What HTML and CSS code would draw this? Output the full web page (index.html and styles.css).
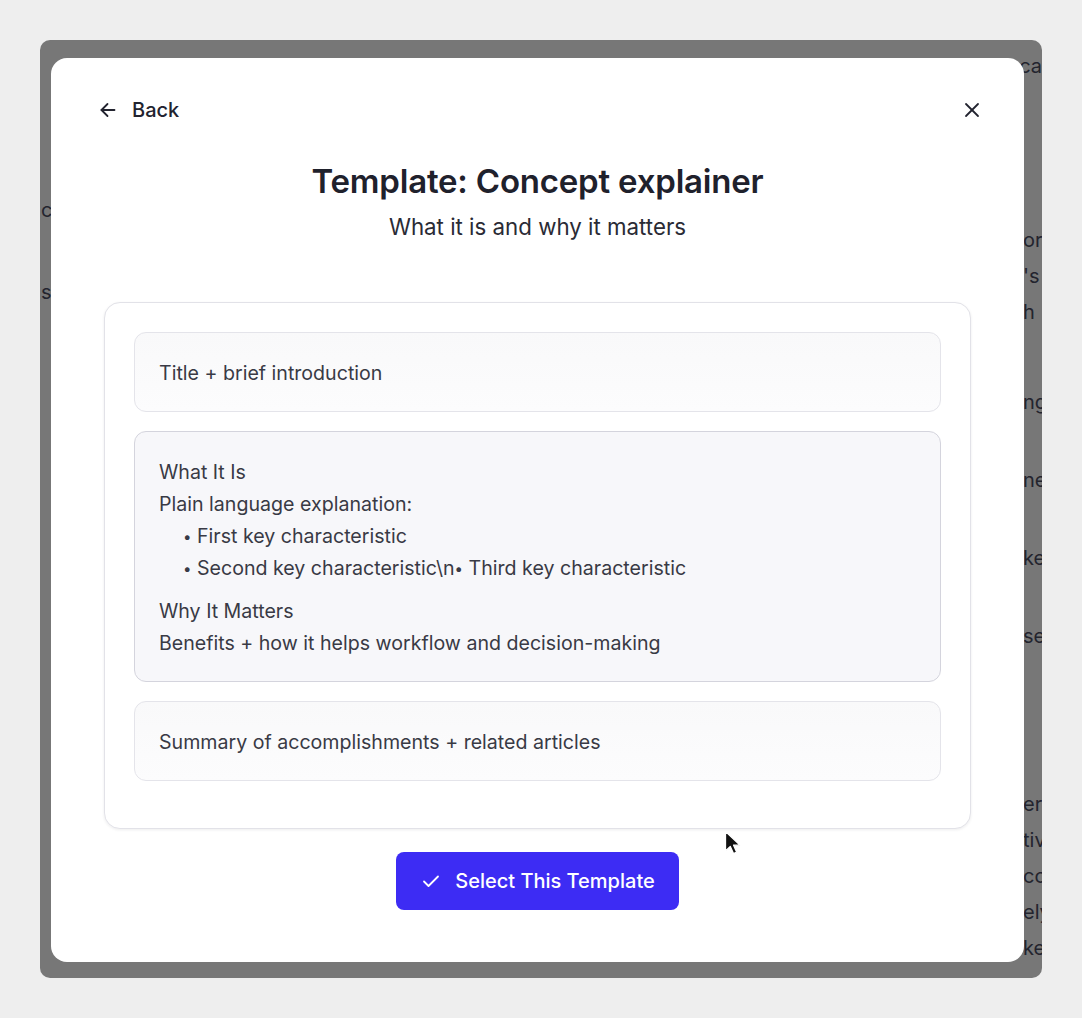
FILE: index.html
```html
<!DOCTYPE html>
<html lang="en">
<head>
<meta charset="utf-8">
<title>Template: Concept explainer</title>
<link rel="stylesheet" href="styles.css">
</head>
<body>
<div class="stage">
  <div class="overlay">
    <div class="bgpage">
      <div class="bg-top">tiles and quick tips to get started, highlights all the critical details in one clear place ca</div>
      <div class="bg-left">
        <div class="bl bl-1">c</div>
        <div class="bl bl-2">s</div>
      </div>
      <div class="bg-right">
        <div class="br br-1">or</div>
        <div class="br">'s</div>
        <div class="br">h</div>
        <div class="br br-g1">ng</div>
        <div class="br br-g2">ne</div>
        <div class="br br-g2">ke</div>
        <div class="br br-g2">se</div>
        <div class="br br-g3">er</div>
        <div class="br">tiv</div>
        <div class="br">co</div>
        <div class="br">ely</div>
        <div class="br">ke</div>
      </div>
    </div>

    <div class="modal">
      <div class="modal-header">
        <button class="back-btn" type="button">
          <svg class="back-icon" viewBox="0 0 20 20" width="20" height="20" fill="none" stroke="currentColor" stroke-width="1.8" stroke-linecap="round" stroke-linejoin="round"><path d="M16.5 10H3.5"/><path d="M9.5 4L3.5 10l6 6"/></svg>
          <span>Back</span>
        </button>
        <button class="close-btn" type="button" aria-label="Close">
          <svg viewBox="0 0 16 16" width="16" height="16" fill="none" stroke="currentColor" stroke-width="1.8" stroke-linecap="round"><path d="M2 2l12 12"/><path d="M14 2L2 14"/></svg>
        </button>
      </div>

      <h1 class="title">Template: Concept explainer</h1>
      <p class="subtitle">What it is and why it matters</p>

      <div class="content">
        <div class="card">
          <div class="section">Title + brief introduction</div>
          <div class="section section-active">
            <div class="line">What It Is</div>
            <div class="line">Plain language explanation:</div>
            <div class="line bullet"><span class="dot">•</span> First key characteristic</div>
            <div class="line bullet"><span class="dot">•</span> Second key characteristic\n<span class="dot">•</span> Third key characteristic</div>
            <div class="line line-gap">Why It Matters</div>
            <div class="line">Benefits + how it helps workflow and decision-making</div>
          </div>
          <div class="section">Summary of accomplishments + related articles</div>
        </div>

        <div class="actions">
          <button class="select-btn" type="button">
            <svg viewBox="0 0 18 18" width="18" height="18" fill="none" stroke="currentColor" stroke-width="1.8" stroke-linecap="round" stroke-linejoin="round"><path d="M2 9.5l4.5 4.5L16 4.5"/></svg>
            <span>Select This Template</span>
          </button>
        </div>
      </div>

      <svg class="cursor" viewBox="0 0 18 26" width="18" height="26"><path d="M1.5 1.5v19.5l4.8-4.6 3.2 7.2 3.2-1.4-3.1-7h6.6z" fill="#111" stroke="#fff" stroke-width="1.3" stroke-linejoin="round"/></svg>
    </div>
  </div>
</div>
</body>
</html>
```

FILE: styles.css
```css
* { box-sizing: border-box; }

html, body {
  margin: 0;
  padding: 0;
}

body {
  background: #eeeeee;
  font-family: Inter, "Noto Sans", "Liberation Sans", sans-serif;
  color: #22232f;
  width: 1082px;
  height: 1018px;
  overflow: hidden;
}

.stage {
  padding: 40px;
}

.overlay {
  position: relative;
  width: 1002px;
  height: 938px;
  background: #777777;
  border-radius: 10px;
  overflow: hidden;
}

/* background page text peeking around the modal */
.bgpage {
  display: grid;
  grid-template-columns: 983px 1fr;
  font-size: 20px;
  line-height: 36px;
  color: #23242e;
  white-space: nowrap;
}

.bg-top {
  grid-column: 1 / -1;
  text-align: right;
  margin-top: 8px;
  height: 36px;
  overflow: hidden;
}

.bg-left, .bg-right {
  display: flex;
  flex-direction: column;
  overflow: hidden;
}

.bl { margin-left: 1px; }
.bl-1 { margin-top: 108px; }
.bl-2 { margin-top: 46px; }

.br { height: 36px; }
.br-1 { margin-top: 138px; }
.br-g1 { margin-top: 54px; }
.br-g2 { margin-top: 42px; }
.br-g3 { margin-top: 132px; }

/* modal */
.modal {
  position: absolute;
  left: 11px;
  top: 18px;
  width: 973px;
  height: 904px;
  background: #ffffff;
  border-radius: 16px;
}

.modal-header {
  display: flex;
  justify-content: space-between;
  align-items: center;
  height: 28px;
  margin-top: 38px;
  padding: 0 44px 0 47px;
}

.back-btn, .close-btn {
  display: flex;
  align-items: center;
  border: 0;
  background: none;
  padding: 0;
  color: #22232f;
  font-family: inherit;
  cursor: pointer;
}

.back-btn {
  gap: 14px;
  font-size: 20px;
  font-weight: 500;
}

.close-btn {
  width: 16px;
  height: 16px;
}

.title {
  margin: 37px 0 0;
  text-align: center;
  font-size: 33px;
  line-height: 40px;
  font-weight: 600;
  letter-spacing: -0.2px;
  color: #1f212c;
}

.subtitle {
  margin: 11px 0 0;
  text-align: center;
  font-size: 22.3px;
  line-height: 30px;
  color: #2a2b35;
}

.content {
  padding: 60px 53px 0;
}

.card {
  display: flex;
  flex-direction: column;
  gap: 19px;
  padding: 29px 29px 47px;
  border: 1px solid #e2e2e8;
  border-radius: 16px;
  box-shadow: 0 1px 3px rgba(20, 20, 40, 0.08);
  background: #ffffff;
}

.section {
  padding: 24px 24px 22px;
  border: 1px solid #e4e4ea;
  border-radius: 12px;
  background: linear-gradient(180deg, #f9f9fa 0%, #fcfcfd 100%);
  font-size: 19.6px;
  line-height: 32px;
  color: #393a45;
}

.section-active {
  background: #f7f7fa;
  border-color: #d4d4dd;
}

.line {
  height: 32px;
}

.line.bullet {
  padding-left: 24px;
}

.dot {
  font-size: 15px;
  line-height: 0;
  vertical-align: 1px;
}

.line.line-gap {
  margin-top: 11px;
}

.actions {
  display: flex;
  justify-content: center;
  margin-top: 23px;
}

.select-btn {
  display: flex;
  align-items: center;
  gap: 15px;
  height: 58px;
  padding: 0 24px 0 26px;
  border: 0;
  border-radius: 8px;
  background: #3d2cf4;
  color: #ffffff;
  font-family: inherit;
  font-size: 20px;
  font-weight: 500;
  cursor: pointer;
}

.cursor {
  position: absolute;
  left: 673px;
  top: 772px;
}
```
